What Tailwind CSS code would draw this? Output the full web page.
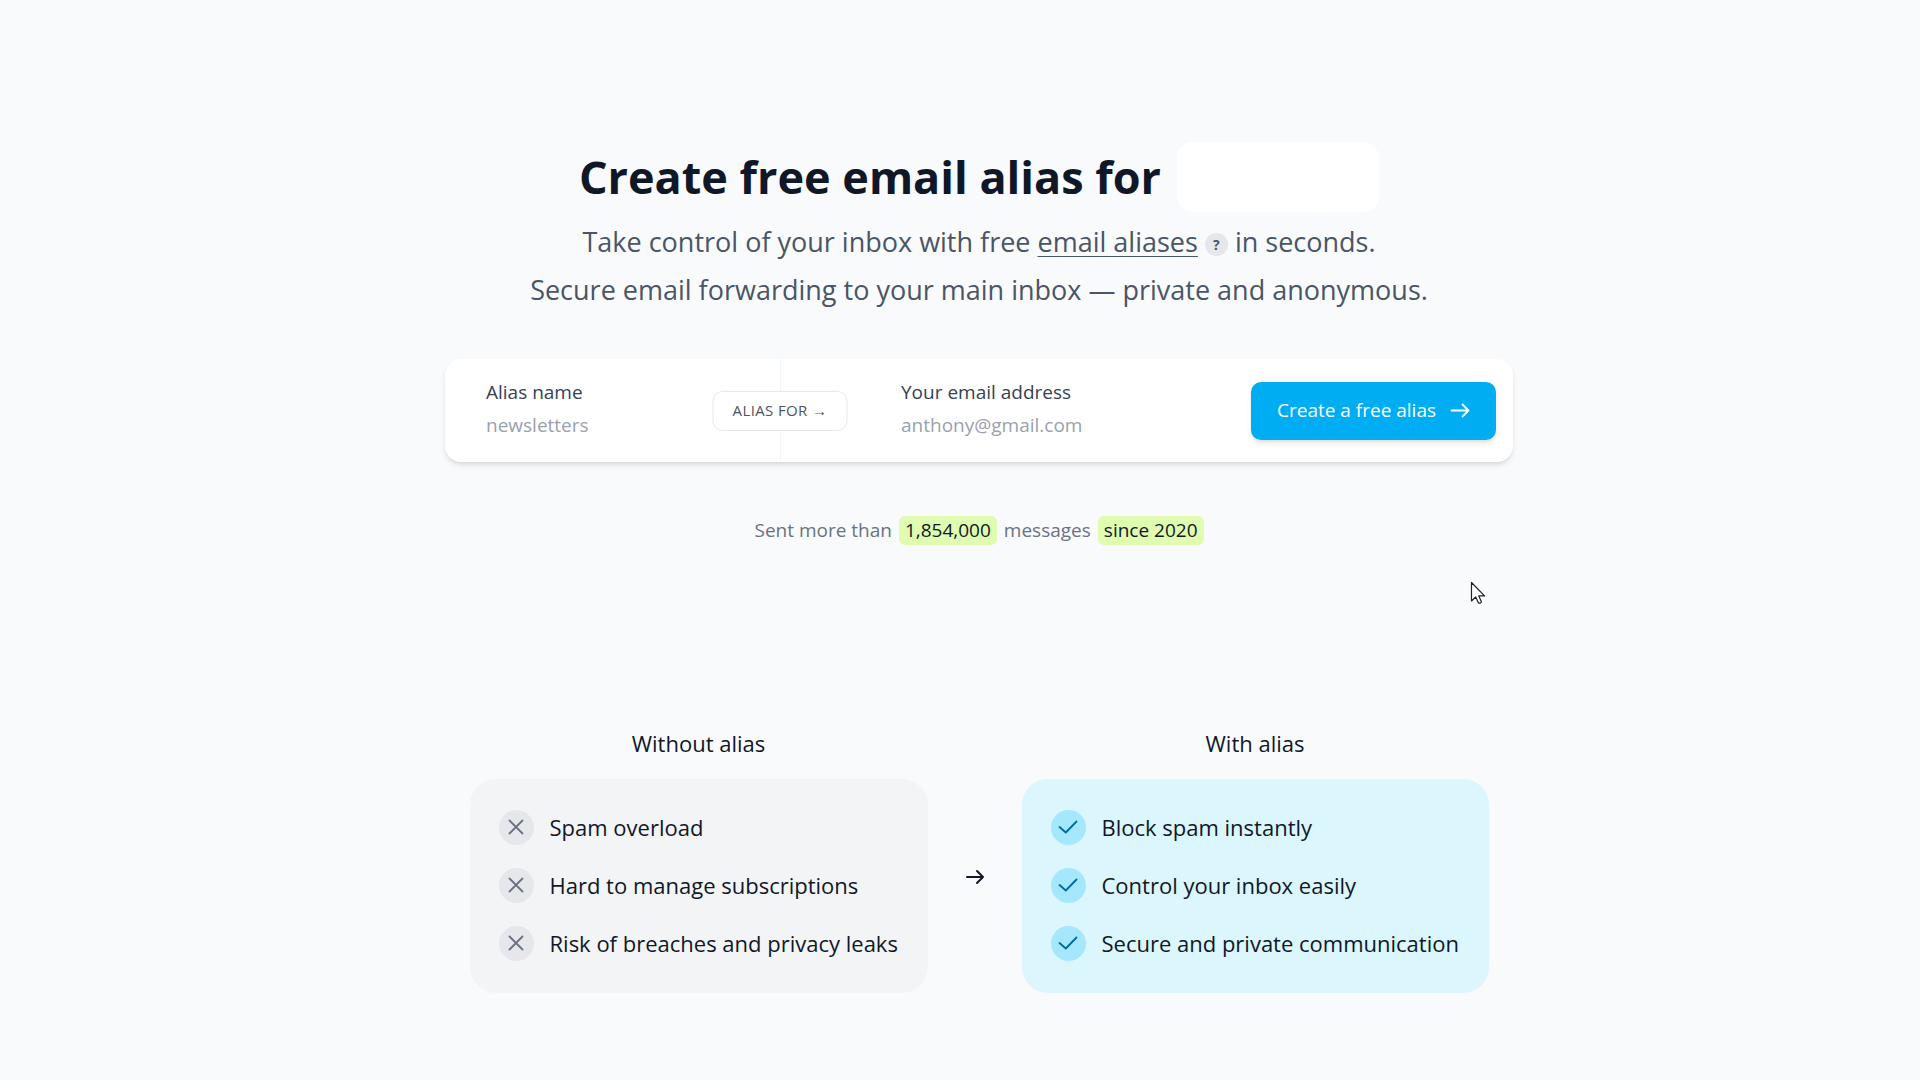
<!DOCTYPE html>
<html lang="en">
<head>
    <meta charset="UTF-8">
    <meta name="viewport" content="width=device-width, initial-scale=1.0">
    <title>Create free email alias</title>
    <script src="https://cdn.jsdelivr.net/npm/@tailwindcss/browser@4"></script>
</head>
<body class="relative min-h-screen bg-[#f9fafc] pl-[38px] font-['Open_Sans','Noto_Sans',sans-serif] text-gray-900">

    <main class="flex flex-col items-center pt-[142px] pb-20">
        <header class="text-center">
            <h1 class="flex items-center justify-center gap-4 text-[45px] font-bold leading-[70px]">
                Create free email alias for
                <span class="h-[70px] w-[202px] rounded-2xl bg-white"></span>
            </h1>
            <p class="mt-1.5 text-[27px] leading-[48px] text-gray-600">
                Take control of your inbox with free
                <a href="#alias" class="underline decoration-1 underline-offset-4">email aliases</a>
                <button type="button" aria-label="What is an email alias?" class="inline-flex size-[23px] items-center justify-center rounded-full bg-gray-200 align-middle text-sm font-bold leading-none">?</button>
                in seconds.<br>
                Secure email forwarding to your main inbox — private and anonymous.
            </p>
        </header>

        <form id="alias" class="mt-[45px] flex w-full max-w-[1068px] items-stretch rounded-2xl bg-white shadow-md">
            <div class="relative w-[336px] border-r border-gray-100 pt-[17px] pb-5 pl-[41px]">
                <label for="alias-name" class="block text-[19px] leading-[33px] text-gray-700">Alias name</label>
                <input id="alias-name" type="text" placeholder="newsletters" class="block h-[33px] w-40 text-[19px] leading-[33px] placeholder-gray-400 outline-none">
                <!-- badge sits on the divider -->
                <span class="absolute top-1/2 right-0 flex h-10 w-[135px] translate-x-1/2 -translate-y-1/2 items-center justify-center rounded-[10px] border border-gray-200 bg-white text-[15px] tracking-wide text-gray-600">ALIAS FOR →</span>
            </div>
            <div class="flex-1 pt-[17px] pb-5 pl-[120px]">
                <label for="email" class="block text-[19px] leading-[33px] text-gray-700">Your email address</label>
                <input id="email" type="email" placeholder="anthony@gmail.com" class="block h-[33px] w-full text-[19px] leading-[33px] placeholder-gray-400 outline-none">
            </div>
            <button type="submit" class="mr-[17px] flex h-[58px] w-[245px] items-center justify-center gap-3.5 self-center rounded-[10px] bg-[#00adf3] text-[19px] text-white shadow-md">
                Create a free alias
                <svg class="size-5" viewBox="0 0 20 20" fill="none" stroke="currentColor" stroke-width="1.8" stroke-linecap="round" stroke-linejoin="round">
                    <path d="M1.500 9.500h17M12.500 3.500l6 6-6 6"/>
                </svg>
            </button>
        </form>

        <p class="mt-[51px] flex items-center gap-[7px] text-[19px] leading-[34px] text-gray-500">
            Sent more than
            <mark class="rounded-md bg-[#dffcb0] px-1.5 leading-[29px] text-gray-900">1,854,000</mark>
            messages
            <mark class="rounded-md bg-[#dffcb0] px-1.5 leading-[29px] text-gray-900">since 2020</mark>
        </p>

        <section class="mt-[178px] flex items-end">
            <div class="w-[458px]">
                <h2 class="mb-[18px] text-center text-[22px] leading-9">Without alias</h2>
                <ul class="flex flex-col gap-[22px] rounded-[26px] bg-gray-100 px-[29px] pt-[30px] pb-8 text-[22px] leading-9">
                    <li class="flex items-center gap-4">
                        <span class="flex size-[35px] shrink-0 items-center justify-center rounded-full bg-gray-200 text-gray-500">
                            <svg class="size-4" viewBox="0 0 16 16" fill="none" stroke="currentColor" stroke-width="1.8" stroke-linecap="round"><path d="M1.5 1.5l13 13M14.5 1.5l-13 13"/></svg>
                        </span>
                        Spam overload
                    </li>
                    <li class="flex items-center gap-4">
                        <span class="flex size-[35px] shrink-0 items-center justify-center rounded-full bg-gray-200 text-gray-500">
                            <svg class="size-4" viewBox="0 0 16 16" fill="none" stroke="currentColor" stroke-width="1.8" stroke-linecap="round"><path d="M1.5 1.5l13 13M14.5 1.5l-13 13"/></svg>
                        </span>
                        Hard to manage subscriptions
                    </li>
                    <li class="flex items-center gap-4">
                        <span class="flex size-[35px] shrink-0 items-center justify-center rounded-full bg-gray-200 text-gray-500">
                            <svg class="size-4" viewBox="0 0 16 16" fill="none" stroke="currentColor" stroke-width="1.8" stroke-linecap="round"><path d="M1.5 1.5l13 13M14.5 1.5l-13 13"/></svg>
                        </span>
                        Risk of breaches and privacy leaks
                    </li>
                </ul>
            </div>

            <div class="flex h-[212px] w-[94px] items-center justify-center pb-5">
                <svg class="size-5" viewBox="0 0 20 20" fill="none" stroke="currentColor" stroke-width="2" stroke-linecap="round" stroke-linejoin="round">
                    <path d="M2 10h16M12 4l6 6-6 6"/>
                </svg>
            </div>

            <div class="w-[467px]">
                <h2 class="mb-[18px] text-center text-[22px] leading-9">With alias</h2>
                <ul class="flex flex-col gap-[22px] rounded-[26px] bg-[#dbf6fd] px-[29px] pt-[30px] pb-8 text-[22px] leading-9">
                    <li class="flex items-center gap-4">
                        <span class="flex size-[35px] shrink-0 items-center justify-center rounded-full bg-[#a5e8fd] text-sky-700">
                            <svg class="h-4 w-5" viewBox="0 0 20 16" fill="none" stroke="currentColor" stroke-width="1.8" stroke-linecap="round" stroke-linejoin="round"><path d="M1.5 8l6.3 5.5L18.500 2.500"/></svg>
                        </span>
                        Block spam instantly
                    </li>
                    <li class="flex items-center gap-4">
                        <span class="flex size-[35px] shrink-0 items-center justify-center rounded-full bg-[#a5e8fd] text-sky-700">
                            <svg class="h-4 w-5" viewBox="0 0 20 16" fill="none" stroke="currentColor" stroke-width="1.8" stroke-linecap="round" stroke-linejoin="round"><path d="M1.5 8l6.3 5.5L18.500 2.500"/></svg>
                        </span>
                        Control your inbox easily
                    </li>
                    <li class="flex items-center gap-4">
                        <span class="flex size-[35px] shrink-0 items-center justify-center rounded-full bg-[#a5e8fd] text-sky-700">
                            <svg class="h-4 w-5" viewBox="0 0 20 16" fill="none" stroke="currentColor" stroke-width="1.8" stroke-linecap="round" stroke-linejoin="round"><path d="M1.5 8l6.3 5.5L18.500 2.500"/></svg>
                        </span>
                        Secure and private communication
                    </li>
                </ul>
            </div>
        </section>
    </main>

    <!-- pointer -->
    <svg class="pointer-events-none absolute top-[581px] left-[1470px] h-6 w-4" viewBox="0 0 16 24" fill="#fff" stroke="#1f1f24" stroke-width="1.2" stroke-linejoin="round">
        <path d="M1.5 1.5v18.5l4.2-4 2.8 6c1.5.6 3-.2 2.8-1.6L8.8 14.9h5.7z"/>
    </svg>

</body>
</html>
